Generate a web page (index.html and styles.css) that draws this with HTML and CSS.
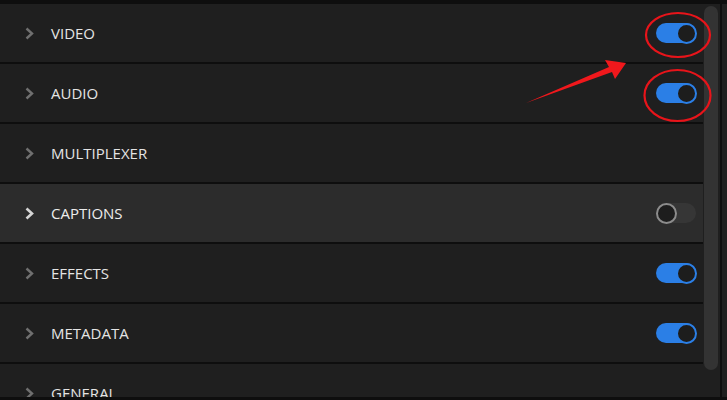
FILE: index.html
```html
<!DOCTYPE html>
<html>
<head>
<meta charset="utf-8">
<link rel="stylesheet" href="styles.css">
</head>
<body>
<div class="panel">
  <div class="list">
    <div class="row">
      <svg class="chev" viewBox="0 0 9 13"><path d="M1.5 1.5 L7 6.5 L1.5 11.5"/></svg>
      <span class="label">VIDEO</span>
      <span class="toggle on"><span class="knob"></span></span>
    </div>
    <div class="row">
      <svg class="chev" viewBox="0 0 9 13"><path d="M1.5 1.5 L7 6.5 L1.5 11.5"/></svg>
      <span class="label">AUDIO</span>
      <span class="toggle on"><span class="knob"></span></span>
    </div>
    <div class="row">
      <svg class="chev" viewBox="0 0 9 13"><path d="M1.5 1.5 L7 6.5 L1.5 11.5"/></svg>
      <span class="label">MULTIPLEXER</span>
    </div>
    <div class="row active">
      <svg class="chev" viewBox="0 0 9 13"><path d="M1.5 1.5 L7 6.5 L1.5 11.5"/></svg>
      <span class="label">CAPTIONS</span>
      <span class="toggle off"><span class="knob"></span></span>
    </div>
    <div class="row">
      <svg class="chev" viewBox="0 0 9 13"><path d="M1.5 1.5 L7 6.5 L1.5 11.5"/></svg>
      <span class="label">EFFECTS</span>
      <span class="toggle on"><span class="knob"></span></span>
    </div>
    <div class="row">
      <svg class="chev" viewBox="0 0 9 13"><path d="M1.5 1.5 L7 6.5 L1.5 11.5"/></svg>
      <span class="label">METADATA</span>
      <span class="toggle on"><span class="knob"></span></span>
    </div>
    <div class="row">
      <svg class="chev" viewBox="0 0 9 13"><path d="M1.5 1.5 L7 6.5 L1.5 11.5"/></svg>
      <span class="label">GENERAL</span>
    </div>
  </div>
  <div class="track"><div class="thumb"></div></div>
  <div class="edge"></div>
  <div class="gutter"></div>
  <svg class="annot" viewBox="0 0 727 400" width="727" height="400">
    <ellipse cx="678" cy="35" rx="32" ry="22"/>
    <ellipse cx="677.5" cy="95.5" rx="33" ry="25.5"/>
    <polygon class="arrow" points="526,103 609,67 605,60 626,63 615,79 612,72"/>
  </svg>
</div>
</body>
</html>
```

FILE: styles.css
```css
html, body {
  margin: 0;
  padding: 0;
  background: #1f1f1f;
  overflow: hidden;
}
.panel {
  position: relative;
  width: 727px;
  height: 400px;
  box-sizing: border-box;
  border-top: 4px solid #0e0e0e;
  border-bottom: 3px solid #0e0e0e;
  display: flex;
  overflow: hidden;
  font-family: "Open Sans", "Noto Sans", sans-serif;
}
.list {
  width: 703px;
  flex: none;
}
.row {
  height: 58px;
  border-bottom: 2px solid #0e0e0e;
  background: #1f1f1f;
  display: flex;
  align-items: center;
  padding-left: 25px;
  padding-right: 7px;
}
.row.active {
  background: #2c2c2c;
}
.chev {
  width: 9px;
  height: 13px;
  flex: none;
  margin-top: 1px;
}
.chev path {
  fill: none;
  stroke: #6f6f6f;
  stroke-width: 2.4;
}
.row.active .chev path {
  stroke: #d6d6d6;
  stroke-width: 2.6;
}
.label {
  margin-left: 17px;
  color: #e4e4e4;
  font-size: 15px;
  flex: 1;
}
.row.active .label {
  color: #ececec;
}
.toggle {
  width: 40px;
  height: 20px;
  border-radius: 10px;
  position: relative;
  flex: none;
}
.toggle.on {
  background: #2b7fe6;
}
.toggle.off {
  background: #363636;
}
.knob {
  position: absolute;
  top: -0.5px;
  width: 21px;
  height: 21px;
  box-sizing: border-box;
  border-radius: 50%;
  background: #1d1d1d;
}
.toggle.on .knob {
  right: -1px;
  border: 2.5px solid #2b7fe6;
}
.toggle.off .knob {
  left: 0;
  border: 2.5px solid #8c8c8c;
}
.track {
  width: 17px;
  flex: none;
  background: #1f1f1f;
  padding-top: 2px;
}
.thumb {
  width: 14px;
  margin-left: 1px;
  height: 364px;
  border-radius: 7px;
  background: #333333;
}
.edge {
  width: 2px;
  flex: none;
  background: #0e0e0e;
}
.gutter {
  flex: 1;
  background: #1f1f1f;
}
.annot {
  position: absolute;
  left: 0;
  top: -4px;
  pointer-events: none;
}
.annot ellipse {
  fill: none;
  stroke: #e8141a;
  stroke-width: 2.2;
}
.annot .arrow {
  fill: #f0181c;
}
```
